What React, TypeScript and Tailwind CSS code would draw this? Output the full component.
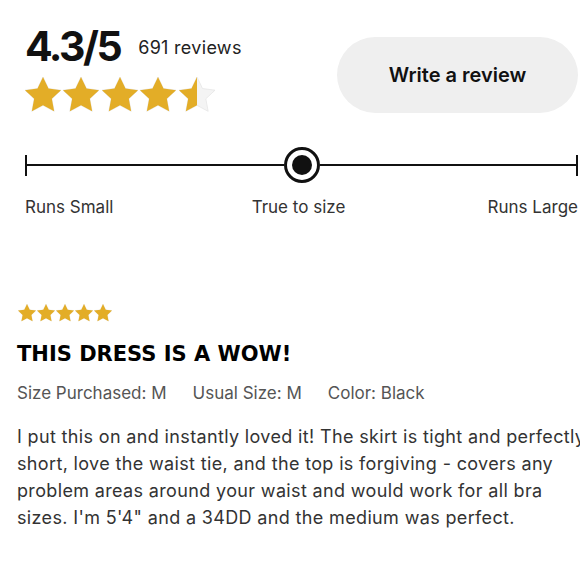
import React from "react"

const GOLD = "#e3ad27"
const STAR = "M12 1.2l3.3 6.9 7.5 1-5.5 5.2 1.4 7.5L12 18.2l-6.7 3.6 1.4-7.5L1.2 9.1l7.5-1z"

function Star({ size, fill = 1, id }: { size: number; fill?: number; id: string }) {
  return (
    <svg width={size} height={size} viewBox="0 0 24 24">
      <defs>
        <clipPath id={id}>
          <rect x="0" y="0" width={24 * fill} height="24" />
        </clipPath>
      </defs>
      <path d={STAR} fill="#f4f4f4" stroke="#e2e2e2" strokeWidth="0.4" />
      <path d={STAR} fill={GOLD} clipPath={`url(#${id})`} />
    </svg>
  )
}

function Stars({ size, rating, gap, prefix }: { size: number; rating: number; gap: string; prefix: string }) {
  return (
    <div className={`flex ${gap}`}>
      {[0, 1, 2, 3, 4].map((i) => (
        <Star key={i} id={`${prefix}${i}`} size={size} fill={Math.max(0, Math.min(1, rating - i))} />
      ))}
    </div>
  )
}

export default function App() {
  return (
    <div className="w-[580px] h-[580px] overflow-hidden bg-white text-[#222] font-['Inter','Liberation_Sans',sans-serif]">
      <div className="flex justify-between pl-[25px] pr-[2px] pt-[26px]">
        <div>
          <div className="flex items-center gap-[18px]">
            <span className="text-[41px] font-bold leading-none tracking-[-2.5px] text-[#111]">4.3/5</span>
            <span className="text-[18px] tracking-[0.3px] text-[#222] mt-[2px]">691 reviews</span>
          </div>
          <div className="mt-[8px] -ml-[2px]">
            <Stars size={40} rating={4.5} gap="-space-x-[1.6px]" prefix="big" />
          </div>
        </div>
        <button className="mt-[11px] w-[241px] h-[76px] rounded-full bg-[#efefef] text-[20px] font-semibold text-[#111]">
          Write a review
        </button>
      </div>

      <div className="mt-[32px] pl-[25px] pr-[2px]">
        <div className="flex items-center h-[36px]">
          <div className="w-[2px] h-[21px] bg-[#111]" />
          <div className="flex-1 h-[2px] bg-[#111]" />
          <div className="w-[36px] h-[36px] rounded-full border-[3.5px] border-[#111] bg-white flex items-center justify-center">
            <div className="w-[20px] h-[20px] rounded-full bg-[#111]" />
          </div>
          <div className="flex-1 h-[2px] bg-[#111]" />
          <div className="w-[2px] h-[21px] bg-[#111]" />
        </div>
        <div className="flex justify-between mt-[12px] text-[17px] text-[#333]">
          <span>Runs Small</span>
          <span className="-ml-[4px]">True to size</span>
          <span>Runs Large</span>
        </div>
      </div>

      <div className="mt-[82px] pl-[17px]">
        <Stars size={20} rating={5} gap="-space-x-[1px]" prefix="small" />
        <h2 className="mt-[21px] text-[21px] font-bold font-['DejaVu_Sans',sans-serif] text-black leading-none">
          THIS DRESS IS A WOW!
        </h2>
        <div className="flex gap-[26px] mt-[16px] text-[17px] text-[#555]">
          <span>Size Purchased: M</span>
          <span>Usual Size: M</span>
          <span>Color: Black</span>
        </div>
        <p className="mt-[17px] w-[600px] text-[18px] tracking-[0.35px] leading-[27px] text-[#333]">
          I put this on and instantly loved it! The skirt is tight and perfectly
          <br />
          short, love the waist tie, and the top is forgiving - covers any
          <br />
          problem areas around your waist and would work for all bra
          <br />
          sizes. I'm 5'4" and a 34DD and the medium was perfect.
        </p>
      </div>
    </div>
  )
}
